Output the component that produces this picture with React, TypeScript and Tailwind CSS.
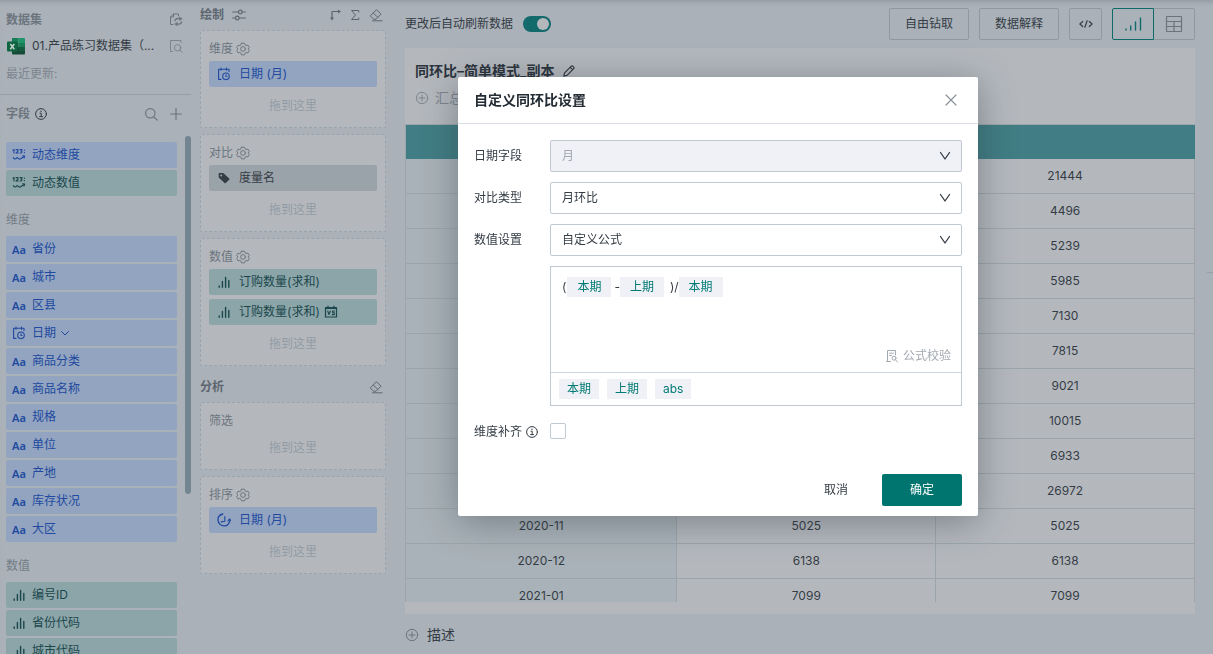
import { useId, type ReactNode } from "react";

type IconProps = { className?: string };

function Svg({ className = "size-3", box = 12, width = 1, children }: IconProps & { box?: number; width?: number; children: ReactNode }) {
  return (
    <svg
      className={`shrink-0 ${className}`}
      viewBox={`0 0 ${box} ${box}`}
      fill="none"
      stroke="currentColor"
      strokeWidth={width}
      strokeLinecap="round"
      strokeLinejoin="round"
      aria-hidden="true"
    >
      {children}
    </svg>
  );
}

const SwapDataIcon = () => (
  <Svg className="size-3.5" box={14}>
    <path d="M4 11.500H1.500V4L4.500 1H9.500V3M4.500 1V4H1.500" />
    <path d="M6 7.700C6.500 5.700 8.500 5.200 10.500 5.700M12.600 9C12.200 11 10.300 11.500 8 11" strokeWidth="1.300" />
    <path d="M10.200 3.600L13.600 5.700L10.500 7.900ZM8.400 8.700V13.200L5.200 11Z" fill="currentColor" stroke="none" />
  </Svg>
);

const PreviewIcon = () => (
  <Svg className="size-3.5" box={14}>
    <path d="M3.500 12.500H1.500V1.500H12V3.500" />
    <circle cx="8.600" cy="8.800" r="3.200" />
    <path d="M10.900 11.100L13.200 13.300" />
  </Svg>
);

const ExcelIcon = () => (
  <svg className="size-[18px] shrink-0" viewBox="0 0 18 18" aria-hidden="true">
    <path d="M5 1H11.500V6H5Z" fill="#187c58" />
    <path d="M11.500 1H17A1 1 0 0 1 18 2V6H11.500Z" fill="#21936a" />
    <path d="M5 6H11.500V10H5Z" fill="#15573a" />
    <path d="M11.500 6H18V10H11.500Z" fill="#187c58" />
    <path d="M5 10H18V16.500A1 1 0 0 1 17 17.500H6A1 1 0 0 1 5 16.500Z" fill="#154b36" />
    <path d="M11.500 10H18V14H11.500Z" fill="#145a3e" />
    <rect y="4.500" width="10.500" height="10" rx="1" fill="#0f6540" />
    <path d="M3.300 7L7.300 12.300M7.300 7L3.300 12.300" stroke="#c3cfcb" strokeWidth="1.500" />
  </svg>
);

const InfoIcon = ({ className = "size-3" }: IconProps) => (
  <Svg className={className}>
    <circle cx="6" cy="6" r="5.400" />
    <path d="M5 5.200H6.200V8.500M4.600 8.600H7.600" />
    <path d="M6 3.200V3.400" strokeWidth="1.200" />
  </Svg>
);

const SearchIcon = () => (
  <Svg className="size-3.5" box={14} width={1.2}>
    <circle cx="6.300" cy="6.300" r="4.700" />
    <path d="M9.800 9.800L13 13" />
  </Svg>
);

const PlusIcon = () => (
  <Svg className="size-3" width={1.2}>
    <path d="M6 0.600V11.400M0.600 6H11.400" />
  </Svg>
);

const CirclePlusIcon = () => (
  <Svg className="size-3.5" box={14}>
    <circle cx="7" cy="7" r="5.700" />
    <path d="M7 4V10M4 7H10" />
  </Svg>
);

const DynamicIcon = () => (
  <Svg className="size-3.5" box={14} width={1.100}>
    <path d="M1 2.200L2 1.500V5M4 1.600H6V3.200L4.100 5H6.200M8 1.600H10.100L9 3L10.100 3.900L9.300 5H8" />
    <path d="M12.400 2.200V2.300M12.400 4.600V4.700" strokeWidth="1.200" />
    <path d="M1.300 9.600C2.600 11.600 3.700 11.200 4.700 9.900C5.600 8.900 6.600 11.600 8 11.100C9.200 10.700 10.300 9.200 12.500 8.200M10.700 7.700L12.700 8L12 10" />
  </Svg>
);

const DateIcon = () => (
  <Svg className="size-3.5" box={14} width={1.100}>
    <path d="M4 12.400H1.600V2.200H12V4.500M4 1V3.300M9.500 1V3.300" />
    <circle cx="9" cy="9.300" r="3.300" />
    <path d="M9 7.800V9.500H10" />
  </Svg>
);

const BarsIcon = () => (
  <Svg className="size-3.5" box={14} width={1.400}>
    <path d="M2.200 11V12.300M5.400 6.500V12.300M8.600 2.500V12.300M11.800 5.500V12.300" />
  </Svg>
);

const ClockIcon = () => (
  <Svg className="size-3.5" box={14} width={1.300}>
    <path d="M5.800 1C2.800 1.700 0.800 4.300 1 7.300C1.300 10.600 4 13 7.300 12.900C10.300 12.700 12.300 10.600 12.700 7.800" />
    <path d="M7.800 3.600V8.200L4.200 8.900M11 7.800L12.700 5.900L13.600 7.700" strokeWidth="1.100" />
  </Svg>
);

const TagIcon = () => (
  <svg className="size-3.5 shrink-0" viewBox="0 0 14 14" aria-hidden="true">
    <path
      fillRule="evenodd"
      fill="currentColor"
      d="M2.200 2H6.300L12.200 7.600Q12.700 8.200 12.200 8.700L8.700 12.100Q8.100 12.600 7.600 12.100L1.700 6.500V2.500Q1.700 2 2.200 2ZM4.200 3.500A1 1 0 1 0 4.200 5.500A1 1 0 1 0 4.200 3.500Z"
    />
  </svg>
);

const GearIcon = () => (
  <Svg className="size-3.5" box={14}>
    <path d="M5.500 1.200H8.500L9.100 2.900L10.200 3.500L12 3.200L13.300 5.500L12.200 6.900V7.200L13.300 8.500L12 10.900L10.200 10.500L9.100 11.100L8.500 12.900H5.500L4.900 11.100L3.800 10.500L2 10.900L0.700 8.500L1.800 7.200V6.900L0.700 5.500L2 3.200L3.800 3.500L4.900 2.900Z" />
    <circle cx="7" cy="7" r="2.400" />
  </Svg>
);

const SlidersIcon = () => (
  <Svg className="size-3.5" box={14} width={1.200}>
    <path d="M0.700 4H6.300M10.300 4H13.300M0.700 10H3.300M7.300 10H13.300" />
    <circle cx="8.300" cy="4" r="1.800" />
    <circle cx="5.300" cy="10" r="1.800" />
  </Svg>
);

const TransposeIcon = () => (
  <Svg className="size-3" width={1.200}>
    <path d="M3 9.500V2.500H9.500" />
    <path d="M9 0.500L12 2.500L9 4.500ZM1 8.500H5L3 11.500Z" fill="currentColor" stroke="none" />
  </Svg>
);

const SumIcon = () => (
  <Svg className="size-3">
    <path d="M9.800 3V1.500H2.500L6.500 6L2.500 10.500H9.800V9" />
  </Svg>
);

const EraserIcon = () => (
  <Svg className="size-3.5" box={14}>
    <path d="M1.700 7.500L7.500 1.700L12 6.200L7 11.200H4.500L1.700 8.400ZM4.300 5L8.800 9.400" />
    <path d="M3.500 12.800H13" />
  </Svg>
);

const CompareIcon = () => (
  <Svg className="size-3.5" box={14} width={1.200}>
    <path d="M1.500 2.500H12.500V12H1.500ZM4 1V3M10 1V3M1.500 3.300H12.500" />
    <path d="M3.700 6L5 9.500L6.300 6M10.500 6H8.500V7.700H10.300V9.600H8.200" strokeWidth="1.100" />
  </Svg>
);

const PencilIcon = () => (
  <Svg className="size-3" width={1.100}>
    <path d="M0.800 11.200L1.600 7.900L8.300 1.200Q9 0.500 9.700 1.200L10.700 2.200Q11.400 2.900 10.700 3.600L4 10.300ZM7.300 2.300L9.700 4.600" />
  </Svg>
);

const SmallChevronIcon = () => (
  <Svg className="size-2.5" box={10}>
    <path d="M1.500 3.500L5 7L8.500 3.500" />
  </Svg>
);

const SelectChevronIcon = ({ className = "size-3" }: IconProps) => (
  <Svg className={className} width={1.300}>
    <path d="M1.500 2.500L6 9L10.500 2.500" />
  </Svg>
);

const CloseIcon = () => (
  <Svg className="size-3" width={1.200}>
    <path d="M1 1L11 11M11 1L1 11" />
  </Svg>
);

const CodeIcon = () => (
  <Svg className="size-3.5" box={14} width={1.200}>
    <path d="M3.700 4.500L0.900 7L3.700 9.500M10.300 4.500L13.100 7L10.300 9.500M8.100 3.700L5.900 10.300" />
  </Svg>
);

const ChartIcon = () => (
  <Svg className="size-[18px]" box={18} width={1.400}>
    <path d="M2 14V15M6.700 11V15M11.500 7V15M16.500 3V15" />
  </Svg>
);

const TableIcon = () => (
  <Svg className="size-[18px]" box={18} width={1.200}>
    <rect x="1.500" y="1.500" width="15" height="15" rx="0.500" />
    <path d="M1.500 6.500H16.500M1.500 11.500H16.500M9 6.500V16.500" />
  </Svg>
);

const CheckFormulaIcon = () => (
  <Svg className="size-3.5" box={14}>
    <path d="M5.500 12.500H2.500V1.500H10.500V6M4.500 4.200H8.500M4.500 6.500H6.500M1.500 12.500H3.500" />
    <circle cx="9" cy="9.200" r="2" />
    <path d="M10.400 10.700L12.500 13" />
  </Svg>
);

type Tone = "blue" | "teal" | "gray";

const tones: Record<Tone, string> = {
  blue: "bg-[#92a4bf] text-[#2149a0]",
  teal: "bg-[#8ba5a9] text-[#1b474c]",
  gray: "bg-[#9ba3aa] text-[#343c45]",
};

function Pill({ tone, icon, gap = "pl-1.5", children }: { tone: Tone; icon: ReactNode; gap?: string; children: ReactNode }) {
  return (
    <li className={`flex h-[26px] shrink-0 items-center rounded-xs ${gap} ${tones[tone]}`}>
      <span className="flex shrink-0 items-center">{icon}</span>
      <span className="ml-1.5 flex items-center gap-1">{children}</span>
    </li>
  );
}

const AaIcon = () => (
  <span className="w-3.5 pt-0.5 font-['Noto_Sans',sans-serif] text-[11px] leading-4 font-semibold">Aa</span>
);

const dimensions = ["省份", "城市", "区县", "日期", "商品分类", "商品名称", "规格", "单位", "产地", "库存状况", "大区"];
const measures = ["编号ID", "省份代码", "城市代码"];

function DataPanel() {
  return (
    <aside className="flex w-[191px] shrink-0 flex-col overflow-hidden">
      <div className="flex flex-col border-b border-[#969fa8] pb-[7px] pl-1.5 pr-2 pt-[9px]">
        <div className="flex h-[22px] items-center justify-between font-semibold text-[#6c757e]">
          <h2>数据集</h2>
          <button aria-label="切换数据集"><SwapDataIcon /></button>
        </div>
        <div className="flex h-[30px] items-center pl-px text-[#343c45]">
          <ExcelIcon />
          <span className="ml-[7px] flex-1 truncate">01.产品练习数据集（...</span>
          <button className="text-[#7c858e]" aria-label="预览数据"><PreviewIcon /></button>
        </div>
        <p className="flex h-[26px] items-center text-[#7c858e]">最近更新:</p>
      </div>
      <div className="flex h-[38px] shrink-0 items-center pl-1.5 pr-[9px] text-[#6c757e]">
        <h2 className="font-semibold">字段</h2>
        <InfoIcon className="ml-[5px] size-3 text-[#343c45]" />
        <button className="ml-auto" aria-label="搜索字段"><SearchIcon /></button>
        <button className="ml-3" aria-label="新建字段"><PlusIcon /></button>
      </div>
      <div className="flex min-h-0 flex-1 pt-[3px]">
        <div className="flex flex-1 flex-col pl-1.5 pr-2 pt-1.5">
          <ul className="flex flex-col gap-0.5">
            <Pill tone="blue" icon={<DynamicIcon />}>动态维度</Pill>
            <Pill tone="teal" icon={<DynamicIcon />}>动态数值</Pill>
          </ul>
          <h3 className="flex h-10 shrink-0 items-center pt-2 text-[#737c85]">维度</h3>
          <ul className="flex flex-col gap-0.5">
            {dimensions.map((name) => (
              <Pill key={name} tone="blue" icon={name === "日期" ? <DateIcon /> : <AaIcon />}>
                {name}
                {name === "日期" && <SmallChevronIcon />}
              </Pill>
            ))}
          </ul>
          <h3 className="flex h-10 shrink-0 items-center pt-2 text-[#737c85]">数值</h3>
          <ul className="flex flex-col gap-0.5">
            {measures.map((name) => (
              <Pill key={name} tone="teal" icon={<BarsIcon />}>{name}</Pill>
            ))}
          </ul>
        </div>
        <div className="h-[358px] w-1.5 rounded-full bg-[#738591]" />
      </div>
    </aside>
  );
}

function DropCard({ title, gear = true, children }: { title: string; gear?: boolean; children?: ReactNode }) {
  return (
    <section className="rounded-xs border border-dashed border-[#98a4ad] bg-[#b4b8bd] px-2">
      <h3 className="flex items-center gap-[3px] pt-2 leading-5 text-[#6c757e]">
        {title}
        {gear && <GearIcon />}
      </h3>
      {children && <ul className="my-0.5 flex flex-col gap-1">{children}</ul>}
      <p className="flex h-[38px] items-center justify-center pb-1 text-[#929ba4]">拖到这里</p>
    </section>
  );
}

function ShelfPanel() {
  return (
    <section className="ml-[9px] flex w-[186px] shrink-0 flex-col">
      <div className="flex h-[30px] items-center text-[#5d666f]">
        <h2 className="font-semibold">绘制</h2>
        <button className="ml-2" aria-label="绘制设置"><SlidersIcon /></button>
        <div className="ml-auto flex items-center gap-2 pr-[3px]">
          <button aria-label="行列转置"><TransposeIcon /></button>
          <button aria-label="汇总"><SumIcon /></button>
          <button aria-label="清空绘制"><EraserIcon /></button>
        </div>
      </div>
      <div className="flex flex-col gap-1.5">
        <DropCard title="维度">
          <Pill tone="blue" gap="pl-2" icon={<DateIcon />}><span className="pl-0.5">日期 (月)</span></Pill>
        </DropCard>
        <DropCard title="对比">
          <Pill tone="gray" gap="pl-2" icon={<TagIcon />}><span className="pl-0.5">度量名</span></Pill>
        </DropCard>
        <DropCard title="数值">
          <Pill tone="teal" gap="pl-2" icon={<BarsIcon />}><span className="pl-0.5">订购数量(求和)</span></Pill>
          <Pill tone="teal" gap="pl-2" icon={<BarsIcon />}><span className="pl-0.5">订购数量(求和)</span><CompareIcon /></Pill>
        </DropCard>
      </div>
      <div className="flex h-9 items-center justify-between pr-[3px] pt-1.5 text-[#5d666f]">
        <h2 className="font-semibold">分析</h2>
        <button aria-label="清空分析"><EraserIcon /></button>
      </div>
      <div className="flex flex-col gap-1.5">
        <DropCard title="筛选" gear={false} />
        <DropCard title="排序">
          <Pill tone="blue" gap="pl-2" icon={<ClockIcon />}><span className="pl-0.5">日期 (月)</span></Pill>
        </DropCard>
      </div>
    </section>
  );
}

const rows: [string, number][] = [
  ["2020-01", 21444],
  ["2020-02", 4496],
  ["2020-03", 5239],
  ["2020-04", 5985],
  ["2020-05", 7130],
  ["2020-06", 7815],
  ["2020-07", 9021],
  ["2020-08", 10015],
  ["2020-09", 6933],
  ["2020-10", 26972],
  ["2020-11", 5025],
  ["2020-12", 6138],
  ["2021-01", 7099],
];

function ResultTable() {
  return (
    <table className="w-full table-fixed border-separate border-spacing-0 border-l border-t border-[#9ca6aa] text-center text-[#343c45]">
      <colgroup>
        <col className="w-[34.4%]" />
        <col className="w-[32.8%]" />
        <col className="w-[32.8%]" />
      </colgroup>
      <thead>
        <tr className="h-[34px] bg-[#417d84]">
          <th />
          <th />
          <th />
        </tr>
      </thead>
      <tbody>
        {rows.map(([month, value]) => (
          <tr key={month} className="h-[35px]">
            <td className="border-b border-r border-[#9ca6aa] bg-[#a9b2b8]">{month}</td>
            <td className="border-b border-r border-[#9ca6aa]">{value}</td>
            <td className="border-b border-r border-[#9ca6aa]">{value}</td>
          </tr>
        ))}
      </tbody>
    </table>
  );
}

function Report() {
  const toolButton = "flex h-8 items-center justify-center rounded-xs border border-[#8f98a1]";
  return (
    <main className="ml-[19px] flex min-w-0 flex-1 flex-col">
      <div className="flex h-12 shrink-0 items-center gap-2.5 text-[#343c45]">
        <label htmlFor="auto-refresh">更改后自动刷新数据</label>
        <input
          id="auto-refresh"
          type="checkbox"
          role="switch"
          defaultChecked
          className="h-4 w-7 appearance-none rounded-full bg-[#126a6b] p-0.5 before:ml-3 before:block before:size-3 before:rounded-full before:bg-[#b4b8bd] before:content-['']"
        />
        <button className={`${toolButton} ml-auto w-20`}>自由钻取</button>
        <button className={`${toolButton} w-20`}>数据解释</button>
        <button className={`${toolButton} w-[33px]`} aria-label="代码"><CodeIcon /></button>
        <div className="flex">
          <button className="flex h-8 w-[42px] items-center justify-center rounded-l-xs border border-[#0f6b6a] text-[#126a6b]" aria-label="图表"><ChartIcon /></button>
          <button className="flex h-8 w-[41px] items-center justify-center rounded-r-xs border border-l-0 border-[#8f98a1] text-[#6c757e]" aria-label="表格"><TableIcon /></button>
        </div>
      </div>
      <section className="flex min-h-0 flex-1 flex-col bg-[#b4b8bd] pb-3">
        <div className="flex h-[76px] shrink-0 flex-col px-2.5 pt-2.5 text-sm">
          <div className="flex h-[26px] items-center gap-2 text-[#2b333c]">
            <h1 className="font-semibold">同环比–简单模式_副本</h1>
            <button aria-label="修改名称"><PencilIcon /></button>
          </div>
          <button className="flex h-7 items-center gap-1.5 text-[#7c858e]">
            <CirclePlusIcon />
            汇总
          </button>
        </div>
        <div className="min-h-0 flex-1 overflow-hidden">
          <ResultTable />
        </div>
      </section>
      <button className="flex h-10 shrink-0 items-center gap-2 pt-0.5 text-left text-sm text-[#343c45]">
        <span className="text-[#6c757e]"><CirclePlusIcon /></span>
        描述
      </button>
    </main>
  );
}

function Field({ label, options, disabled }: { label: string; options: string[]; disabled?: boolean }) {
  const id = useId();
  return (
    <div className="flex items-center">
      <label htmlFor={id} className="w-[76px] shrink-0">{label}</label>
      <div className="relative flex-1">
        <select
          id={id}
          disabled={disabled}
          className="block h-8 w-full appearance-none rounded-xs border border-[#c1c9d2] bg-white pl-[11px] pr-8 disabled:bg-[#f0f1f6] disabled:text-[#a3a9b0] disabled:opacity-100"
        >
          {options.map((option) => (
            <option key={option}>{option}</option>
          ))}
        </select>
        <SelectChevronIcon className="pointer-events-none absolute right-[11px] top-2.5 size-3 text-[#343c45]" />
      </div>
    </div>
  );
}

function CompareDialog() {
  const token = "inline-flex h-5 items-center justify-center bg-[#f0f1f6] text-[#007a74]";
  return (
    <div className="fixed inset-0 flex items-start justify-center overflow-hidden pl-[223px] pt-[77px]">
      <div
        role="dialog"
        aria-labelledby="dialog-title"
        className="w-[520px] rounded-xs bg-white text-[#343c45] shadow-[0_6px_36px_0_rgba(40,50,60,0.4)]"
      >
        <div className="flex h-[47px] items-center justify-between border-b border-[#dbdee5] pl-4 pr-[21px]">
          <h2 id="dialog-title" className="text-sm font-semibold text-[#232b33]">自定义同环比设置</h2>
          <button className="text-[#8a9199]" aria-label="关闭"><CloseIcon /></button>
        </div>
        <form className="flex flex-col px-4 pb-2.5 pt-4">
          <div className="flex flex-col gap-2.5">
            <Field label="日期字段" options={["月"]} disabled />
            <Field label="对比类型" options={["月环比"]} />
            <Field label="数值设置" options={["自定义公式"]} />
            <div className="ml-[76px] flex flex-col border border-[#c1c9d2]">
              <div className="flex h-[106px] flex-col justify-between border-b border-[#d0d6de] pb-2 pt-2.5">
                <div role="textbox" aria-label="公式" className="flex h-5 items-center pl-[11px] leading-4">
                  <span className="pr-px">(</span>
                  <span className={`${token} w-11`}>本期</span>
                  <span className="pl-[3px]">-</span>
                  <span className={`${token} w-11`}>上期</span>
                  <span className="pl-1.5">)/</span>
                  <span className={`${token} w-11`}>本期</span>
                </div>
                <button type="button" className="flex h-4 items-center gap-1 self-end pr-2.5 text-[#a3a9b0]">
                  <CheckFormulaIcon />
                  公式校验
                </button>
              </div>
              <div className="flex h-8 items-center gap-2 px-2">
                <button type="button" className={`${token} px-2`}>本期</button>
                <button type="button" className={`${token} px-2`}>上期</button>
                <button type="button" className={`${token} px-2`}>abs</button>
              </div>
            </div>
          </div>
          <div className="flex h-[50px] items-center">
            <label htmlFor="fill-dimension" className="flex w-[76px] items-center gap-1 pt-px">
              维度补齐
              <InfoIcon />
            </label>
            <input id="fill-dimension" type="checkbox" className="size-4 appearance-none rounded-xs border border-[#c1c9d2] bg-white" />
          </div>
          <div className="flex justify-end gap-2.5 pt-[18px]">
            <button type="button" className="h-8 w-[72px]">取消</button>
            <button type="submit" className="h-8 w-20 rounded-xs bg-[#007570] text-white">确定</button>
          </div>
        </form>
      </div>
    </div>
  );
}

export default function App() {
  return (
    <div className="flex h-screen overflow-hidden bg-[#aab1b9] font-['Inter','Noto_Sans_CJK_SC',sans-serif] text-xs shadow-[inset_0_6px_5px_-4px_#9299a1]">
      <DataPanel />
      <ShelfPanel />
      <Report />
      <div className="flex w-[18px] shrink-0 flex-col items-end pt-[272px]">
        <div className="h-px w-1.5 bg-[#969fa8]" />
      </div>
      <CompareDialog />
    </div>
  );
}
